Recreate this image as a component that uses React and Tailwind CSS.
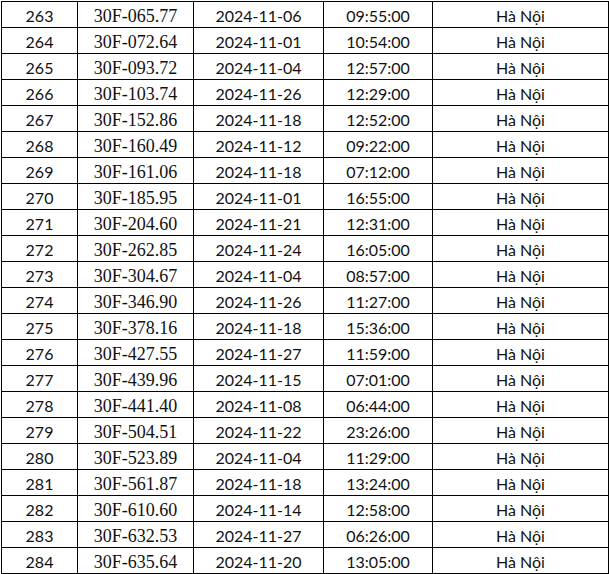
import React from "react";

const rows = [
    [263, "30F-065.77", "2024-11-06", "09:55:00"],
    [264, "30F-072.64", "2024-11-01", "10:54:00"],
    [265, "30F-093.72", "2024-11-04", "12:57:00"],
    [266, "30F-103.74", "2024-11-26", "12:29:00"],
    [267, "30F-152.86", "2024-11-18", "12:52:00"],
    [268, "30F-160.49", "2024-11-12", "09:22:00"],
    [269, "30F-161.06", "2024-11-18", "07:12:00"],
    [270, "30F-185.95", "2024-11-01", "16:55:00"],
    [271, "30F-204.60", "2024-11-21", "12:31:00"],
    [272, "30F-262.85", "2024-11-24", "16:05:00"],
    [273, "30F-304.67", "2024-11-04", "08:57:00"],
    [274, "30F-346.90", "2024-11-26", "11:27:00"],
    [275, "30F-378.16", "2024-11-18", "15:36:00"],
    [276, "30F-427.55", "2024-11-27", "11:59:00"],
    [277, "30F-439.96", "2024-11-15", "07:01:00"],
    [278, "30F-441.40", "2024-11-08", "06:44:00"],
    [279, "30F-504.51", "2024-11-22", "23:26:00"],
    [280, "30F-523.89", "2024-11-04", "11:29:00"],
    [281, "30F-561.87", "2024-11-18", "13:24:00"],
    [282, "30F-610.60", "2024-11-14", "12:58:00"],
    [283, "30F-632.53", "2024-11-27", "06:26:00"],
    [284, "30F-635.64", "2024-11-20", "13:05:00"],
];

const sans = "font-['Lato','Open_Sans',sans-serif] text-[16px]";
const serif = "font-['Liberation_Serif','Times_New_Roman',serif] text-[18px]";
const cell = "border border-black p-0 text-center text-[#111]";
const inner = "h-[25px] leading-[28px] overflow-hidden whitespace-nowrap";

function Cell({ font, children }) {
    return (
        <td className={`${cell} ${font}`}>
            <div className={inner}>{children}</div>
        </td>
    );
}

export default function App() {
    return (
        <div className="w-[609px] h-[574px] bg-white overflow-hidden pt-px pl-px">
            <table className="table-fixed border-collapse w-[607px]">
                <colgroup>
                    <col className="w-[76px]" />
                    <col className="w-[116px]" />
                    <col className="w-[130px]" />
                    <col className="w-[109px]" />
                    <col className="w-[176px]" />
                </colgroup>
                <tbody>
                    {rows.map(([no, plate, date, time]) => (
                        <tr key={no}>
                            <Cell font={sans}>{no}</Cell>
                            <Cell font={serif}>{plate}</Cell>
                            <Cell font={sans}>{date}</Cell>
                            <Cell font={sans}>{time}</Cell>
                            <Cell font={sans}>Hà Nội</Cell>
                        </tr>
                    ))}
                </tbody>
            </table>
        </div>
    );
}
